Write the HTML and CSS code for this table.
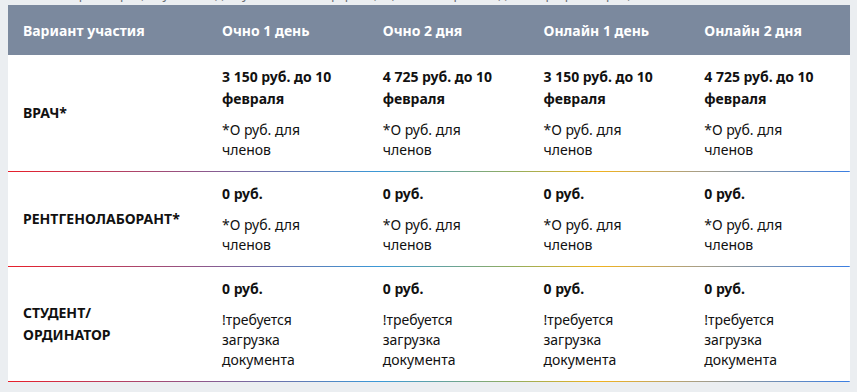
FILE: index.html
```html
<!DOCTYPE html>
<html lang="ru">
<head>
  <meta charset="UTF-8" />
  <meta name="viewport" content="width=device-width, initial-scale=1.0"/>
  <title>Стоимость участия</title>
  <link rel="stylesheet" href="styles.css">
</head>
<body>
  <p class="intro">Стоимость регистрации указана для участия в конференции, оплата производится при регистрации на сайте</p>

  <table class="prices">
    <thead>
      <tr>
        <th>Вариант участия</th>
        <th>Очно 1 день</th>
        <th>Очно 2 дня</th>
        <th>Онлайн 1 день</th>
        <th>Онлайн 2 дня</th>
      </tr>
    </thead>
    <tbody>
      <tr>
        <td class="role">ВРАЧ*</td>
        <td><p class="price">3 150 руб. до 10 февраля</p><p>*О руб. для членов</p></td>
        <td><p class="price">4 725 руб. до 10 февраля</p><p>*О руб. для членов</p></td>
        <td><p class="price">3 150 руб. до 10 февраля</p><p>*О руб. для членов</p></td>
        <td><p class="price">4 725 руб. до 10 февраля</p><p>*О руб. для членов</p></td>
      </tr>
      <tr>
        <td class="role">РЕНТГЕНОЛАБОРАНТ*</td>
        <td><p class="price">0 руб.</p><p>*О руб. для членов</p></td>
        <td><p class="price">0 руб.</p><p>*О руб. для членов</p></td>
        <td><p class="price">0 руб.</p><p>*О руб. для членов</p></td>
        <td><p class="price">0 руб.</p><p>*О руб. для членов</p></td>
      </tr>
      <tr>
        <td class="role">СТУДЕНТ/<br>ОРДИНАТОР</td>
        <td><p class="price">0 руб.</p><p>!требуется загрузка документа</p></td>
        <td><p class="price">0 руб.</p><p>!требуется загрузка документа</p></td>
        <td><p class="price">0 руб.</p><p>!требуется загрузка документа</p></td>
        <td><p class="price">0 руб.</p><p>!требуется загрузка документа</p></td>
      </tr>
    </tbody>
  </table>
</body>
</html>
```

FILE: styles.css
```css
body {
  margin: 0;
  background: #ebeef1;
  font-family: "Noto Sans", "Open Sans", sans-serif;
  color: #111;
  overflow: hidden;
}

.intro {
  margin: -15px 0 0 8px;
  height: 20px;
  font-size: 13px;
  line-height: 19px;
  color: #6b6f75;
  white-space: nowrap;
  overflow: hidden;
}

.prices {
  margin-left: 8px;
  width: 842px;
  border-collapse: collapse;
  table-layout: fixed;
  background: #fff;
}

.prices th {
  height: 50px;
  padding: 0 20px 0 15px;
  background: #7b899e;
  color: #fff;
  font-size: 14px;
  font-weight: 700;
  text-align: left;
}

.prices th:first-child {
  width: 169px;
  padding-right: 15px;
}

.prices tbody tr {
  background:
    linear-gradient(to right, #e81f2a 0%, #8b5a8f 24%, #3a99d8 44%, #93ad5e 60%, #f1b21e 70%, #a99f86 82%, #3a7ee3 100%)
    left bottom / 100% 1px no-repeat,
    #fff;
}

.prices td {
  padding: 11px 20px 12px 15px;
  font-size: 14px;
  line-height: 20px;
  vertical-align: middle;
}

.prices td.role {
  padding-right: 15px;
  font-weight: 700;
  line-height: 22px;
}

.prices td p {
  margin: 0;
}

.prices td p.price {
  font-weight: 700;
  line-height: 22px;
  margin-bottom: 10px;
}
```
